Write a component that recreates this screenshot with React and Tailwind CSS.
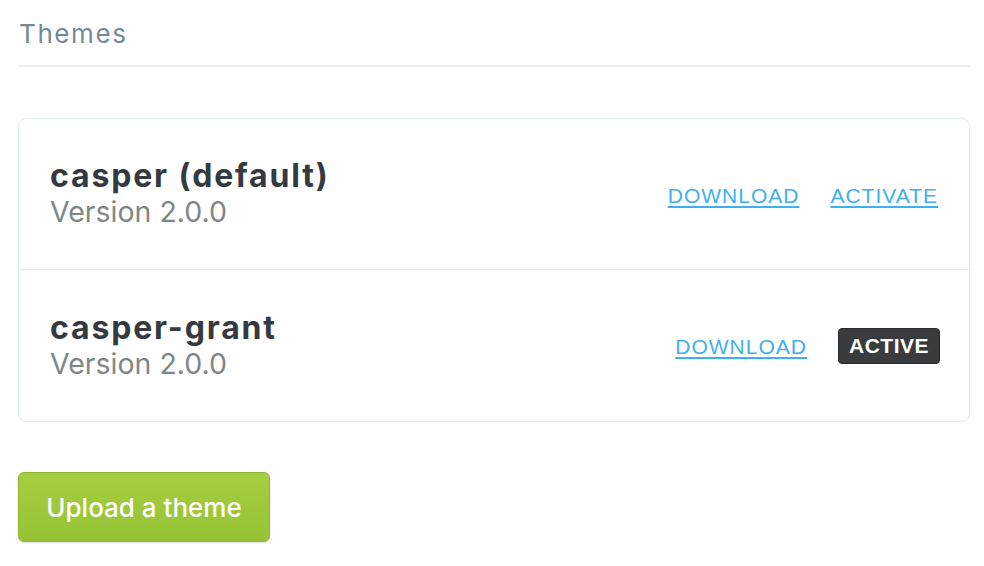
import React from 'react';

const themes = [
    { name: 'casper (default)', version: '2.0.0', active: false },
    { name: 'casper-grant', version: '2.0.0', active: true },
];

const linkFont = { fontFamily: '"Liberation Sans", Arial, sans-serif' };

const ThemeRow = ({ theme, last }) => (
    <div className={`flex items-center justify-between h-[151px] pl-[31px] pr-[31px] ${last ? '' : 'border-b border-[#e3eced]'}`}>
        <div className="flex flex-col">
            <span className="text-[32px] leading-[36px] font-bold tracking-[1.85px] text-[#343a3f]">{theme.name}</span>
            <span className="text-[28.5px] leading-[36px] text-[#7d878a]">Version {theme.version}</span>
        </div>
        <div className="flex items-center gap-[31px] pt-[3px] text-[21px] tracking-[1px] uppercase" style={linkFont}>
            <a href="#" className="text-[#3eb0ef] underline underline-offset-[3px]">Download</a>
            {theme.active ? (
                <span className="bg-[#3a3b3c] text-white font-bold tracking-[0.5px] px-[10px] h-[36px] leading-[34px] rounded-[4px] border border-[#2a2b2c] -mr-[2px] -mt-[3px]">ACTIVE</span>
            ) : (
                <a href="#" className="text-[#3eb0ef] underline underline-offset-[3px]">Activate</a>
            )}
        </div>
    </div>
);

export default function App() {
    return (
        <div className="min-h-screen bg-white pl-[18px] pr-[14px] pt-[16px]" style={{ fontFamily: 'Inter, "Noto Sans", sans-serif' }}>
            <div className="border-b-2 border-[#e9eff0] pb-[13px] pl-[1px]">
                <h2 className="text-[26px] leading-[36px] tracking-[1.6px] text-[#738a94]">Themes</h2>
            </div>

            <div className="mt-[51px] border border-[#e3eced] rounded-[8px]">
                {themes.map((t, i) => (
                    <ThemeRow key={t.name} theme={t} last={i === themes.length - 1} />
                ))}
            </div>

            <button className="mt-[50px] w-[252px] h-[70px] rounded-[6px] bg-gradient-to-b from-[#a5cf40] to-[#98c236] border border-[#8db531] text-white text-[26px] font-medium shadow-[0_1px_2px_rgba(0,0,0,0.15)]">
                Upload a theme
            </button>
        </div>
    );
}
